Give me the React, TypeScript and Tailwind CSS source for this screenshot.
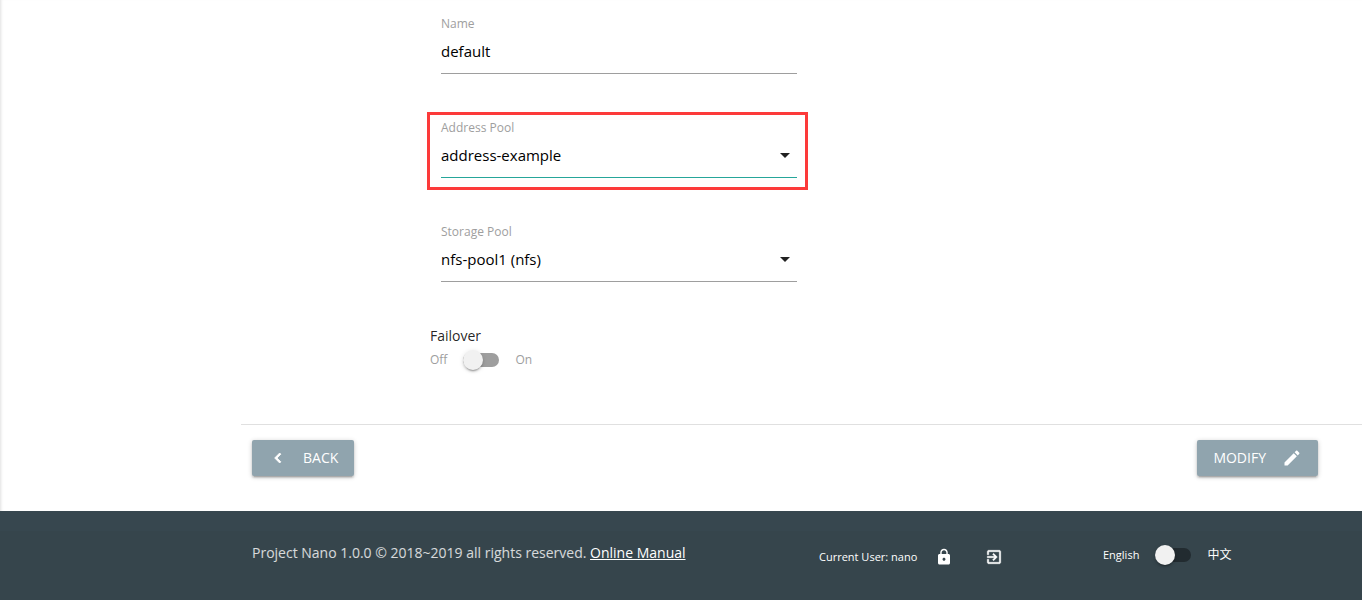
import { useState, type ReactNode } from 'react';

const FONT = 'font-["Open_Sans","Noto_Sans_CJK_SC",sans-serif]';

function Field({ id, label, children }: { id: string; label: string; children: ReactNode }) {
  return (
    <div className="flex flex-col px-[11px]">
      <label htmlFor={id} className="text-xs leading-3 text-[#9e9e9e]">{label}</label>
      {children}
    </div>
  );
}

function SelectBox({ id, value, active = false }: { id: string; value: string; active?: boolean }) {
  return (
    <div className="relative flex">
      <select
        id={id}
        defaultValue={value}
        className={`h-11 w-full appearance-none border-b bg-transparent text-[15px] text-black outline-none ${active ? 'border-[#26a69a]' : 'border-[#9e9e9e]'}`}
      >
        <option value={value}>{value}</option>
      </select>
      <svg viewBox="0 0 24 24" className="pointer-events-none absolute top-[9px] right-0 size-6 fill-black/87" aria-hidden="true">
        <path d="M7 10l5 5 5-5z" />
      </svg>
    </div>
  );
}

function Switch({ label, dark = false }: { label: string; dark?: boolean }) {
  const [on, setOn] = useState(false);
  return (
    <span className="relative mx-4 flex h-5 w-9 items-center">
      <input
        type="checkbox"
        role="switch"
        aria-label={label}
        checked={on}
        onChange={() => setOn(!on)}
        className={`peer h-[14px] w-9 cursor-pointer appearance-none rounded-full ${dark ? 'bg-[#222b30]' : 'bg-[#9e9e9e]'}`}
      />
      <span className="pointer-events-none absolute top-0 left-0 size-5 rounded-full bg-[#f1f1f1] shadow-[0_3px_1px_-2px_rgba(0,0,0,0.2),0_2px_2px_0_rgba(0,0,0,0.14),0_1px_5px_0_rgba(0,0,0,0.12)] peer-checked:left-4" />
    </span>
  );
}

const BUTTON =
  'flex h-9 cursor-pointer items-center rounded-xs bg-[#90a4ae] px-4 text-sm text-white shadow-[0_2px_2px_0_rgba(0,0,0,0.14),0_3px_1px_-2px_rgba(0,0,0,0.12),0_1px_5px_0_rgba(0,0,0,0.2)]';

export default function App() {
  return (
    <div className={`flex min-h-screen flex-col bg-white text-[15px] text-black/87 shadow-[inset_3px_0_3px_-2px_rgba(0,0,0,0.12)] ${FONT}`}>
      <main className="pl-[241px]">
        <form onSubmit={(e) => e.preventDefault()}>
          <div className="ml-[189px] flex max-w-[378px] flex-col gap-12 pt-[18px]">
            <Field id="name" label="Name">
              <input id="name" defaultValue="default" className="h-11 border-b border-[#9e9e9e] pb-0.5 text-[15px] text-black outline-none" />
            </Field>
            <div className="relative">
              <Field id="address" label="Address Pool">
                <SelectBox id="address" value="address-example" active />
              </Field>
              <div className="pointer-events-none absolute -top-2.5 right-0 -bottom-3 -left-[3px] border-3 border-[#fc3a3a]" />
            </div>
            <Field id="storage" label="Storage Pool">
              <SelectBox id="storage" value="nfs-pool1 (nfs)" />
            </Field>
            <div className="-mt-2 flex flex-col">
              <span className="text-sm leading-7">Failover</span>
              <div className="flex items-center text-xs text-[#9e9e9e]">
                <span>Off</span>
                <Switch label="Failover" />
                <span>On</span>
              </div>
            </div>
          </div>
          <div className="mt-[54px] flex justify-between border-t border-[#e0e0e0] pt-[15px] pr-11 pb-[35px] pl-[11px]">
            <button type="button" className={BUTTON}>
              <svg viewBox="0 0 24 24" className="mr-[15px] size-5 fill-current stroke-current stroke-1" aria-hidden="true">
                <path d="M15.41 7.41L14 6l-6 6 6 6 1.41-1.41L10.83 12z" />
              </svg>
              BACK
            </button>
            <button type="submit" className={BUTTON}>
              MODIFY
              <svg viewBox="0 0 24 24" className="ml-4 size-5 fill-current" aria-hidden="true">
                <path d="M3 17.25V21h3.75L17.81 9.94l-3.75-3.75L3 17.25zM20.71 7.04c.39-.39.39-1.02 0-1.41l-2.34-2.34c-.39-.39-1.02-.39-1.41 0l-1.83 1.83 3.75 3.75 1.83-1.83z" />
              </svg>
            </button>
          </div>
        </form>
      </main>
      <footer className="flex grow flex-col bg-[#37474f] pt-5">
        <div className="flex grow items-start bg-[#333]/8 pt-2.5 pl-[252px] text-[11px] text-white">
          <p className="w-[567px] text-sm leading-6 text-white/80">
            Project Nano 1.0.0 © 2018~2019 all rights reserved.{' '}
            <a href="#manual" className="text-white underline">Online Manual</a>
          </p>
          <div className="flex w-[284px] items-center pt-[7px]">
            <span>Current User: nano</span>
            <button type="button" aria-label="Lock" className="ml-[18px] cursor-pointer">
              <svg viewBox="0 0 24 24" className="size-[18px] fill-current" aria-hidden="true">
                <path d="M18 8h-1V6c0-2.76-2.24-5-5-5S7 3.24 7 6v2H6c-1.1 0-2 .9-2 2v10c0 1.1.9 2 2 2h12c1.1 0 2-.9 2-2V10c0-1.1-.9-2-2-2zm-6 9c-1.1 0-2-.9-2-2s.9-2 2-2 2 .9 2 2-.9 2-2 2zm3.1-9H8.9V6c0-1.71 1.39-3.1 3.1-3.1 1.71 0 3.1 1.39 3.1 3.1v2z" />
              </svg>
            </button>
            <button type="button" aria-label="Log out" className="ml-8 cursor-pointer">
              <svg viewBox="0 0 24 24" className="size-[18px] fill-current stroke-current stroke-[0.5]" aria-hidden="true">
                <path d="M10.09 15.59L11.5 17l5-5-5-5-1.41 1.41L12.67 11H3v2h9.67l-2.58 2.59zM19 3H5c-1.11 0-2 .9-2 2v4h2V5h14v14H5v-4H3v4c0 1.1.89 2 2 2h14c1.1 0 2-.9 2-2V5c0-1.1-.9-2-2-2z" />
              </svg>
            </button>
          </div>
          <div className="flex items-center pt-1">
            <span>English</span>
            <Switch label="Language" dark />
            <span className="text-xs">中文</span>
          </div>
        </div>
      </footer>
    </div>
  );
}
